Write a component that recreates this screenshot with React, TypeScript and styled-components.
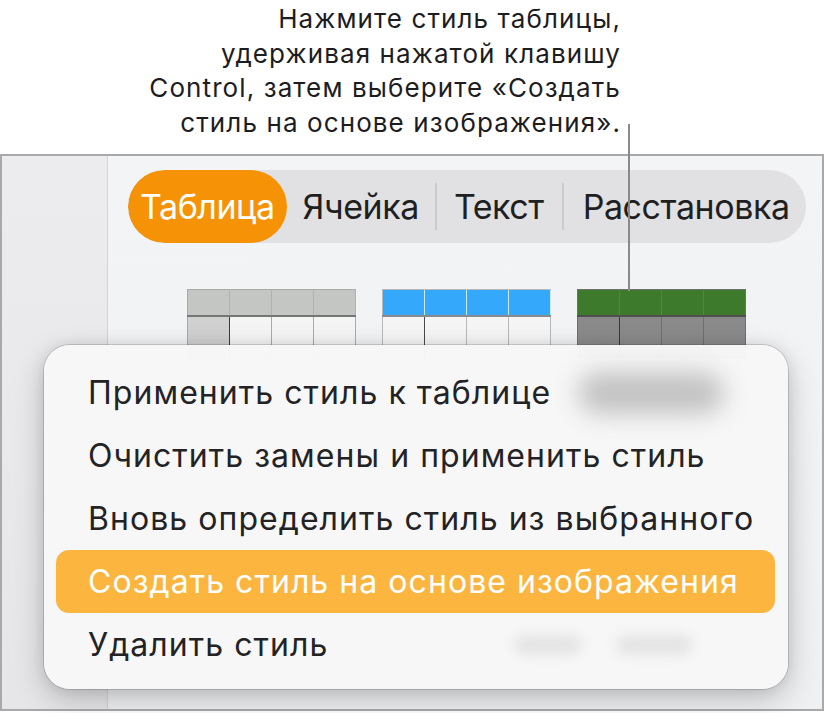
import React from "react";
import styled, { createGlobalStyle, css } from "styled-components";

const GlobalStyle = createGlobalStyle`
  html, body { margin: 0; padding: 0; background: #ffffff; }
  body { font-family: Inter, "Noto Sans", "Liberation Sans", sans-serif; }
  * { box-sizing: border-box; }
`;

const Page = styled.div`
  position: relative;
  width: 825px;
  height: 713px;
  overflow: hidden;
  display: flex;
  flex-direction: column;
`;

const Callout = styled.div`
  height: 154px;
  display: flex;
  justify-content: flex-end;
  padding: 2px 205px 0 0;
`;

const CalloutText = styled.p`
  margin: 0 -1px 0 0;
  text-align: right;
  font-size: 26px;
  line-height: 34.5px;
  color: #1d1d1f;
  letter-spacing: 1.1px;
`;

const Leader = styled.div`
  position: absolute;
  left: 628px;
  top: 124px;
  width: 2px;
  height: 167px;
  background: #8a8a8a;
`;

const Frame = styled.div`
  flex: 1;
  display: flex;
  width: 824px;
  border: 2px solid #a9a9ab;
  margin-bottom: 2px;
  background: #f1f2f4;
`;

const Sidebar = styled.div`
  flex: 0 0 106px;
  border-right: 1px solid #d4d4d6;
  background: linear-gradient(180deg, #ececee 0%, #e6e6e8 100%);
`;

const Main = styled.div`
  flex: 1;
  min-width: 0;
  display: flex;
  flex-direction: column;
  padding: 14px 16px 0 20px;
  background: linear-gradient(180deg, #f3f4f6 0%, #eff0f2 100%);
`;

const TabBar = styled.div`
  display: flex;
  align-items: center;
  height: 73px;
  border-radius: 37px;
  background: #e1e1e4;
  overflow: hidden;
`;

const Tab = styled.div<{ $active?: boolean; $pl: number; $pr: number }>`
  flex: none;
  height: 100%;
  display: flex;
  align-items: center;
  padding: 0 ${(p) => p.$pr}px 0 ${(p) => p.$pl}px;
  font-size: 34px;
  letter-spacing: -0.45px;
  color: #1f1f21;
  border-radius: 37px;
  ${(p) =>
    p.$active &&
    css`
      background: #f59205;
      color: #ffffff;
    `}
`;

const TabSep = styled.div`
  flex: none;
  width: 2px;
  height: 47px;
  background: #cbcbce;
`;

const Styles = styled.div`
  display: flex;
  justify-content: center;
  gap: 26px;
  margin-top: 46px;
  padding-right: 2px;
`;

type ThumbColors = {
  head: string;
  headLine: string;
  headSep: string;
  bodyFirst: string;
  body: string;
  firstSep: string;
  frame: string;
};

const Thumb = styled.div<{ $c: ThumbColors }>`
  width: 169px;
  display: grid;
  grid-template-columns: repeat(4, 1fr);
  grid-template-rows: 25px 2px 40px;
  border: 1px solid ${(p) => p.$c.frame};
  background: ${(p) => p.$c.frame};
  column-gap: 1px;
`;

const HeadCell = styled.div<{ $c: ThumbColors }>`
  background: ${(p) => p.$c.head};
  box-shadow: 1px 0 0 ${(p) => p.$c.headSep};
`;

const HeadLine = styled.div<{ $c: ThumbColors }>`
  grid-column: 1 / -1;
  background: ${(p) => p.$c.headLine};
  margin: 0 -1px;
`;

const BodyCell = styled.div<{ $c: ThumbColors; $first?: boolean }>`
  background: ${(p) => (p.$first ? p.$c.bodyFirst : p.$c.body)};
  ${(p) =>
    p.$first &&
    css`
      box-shadow: 2px 0 0 ${p.$c.firstSep};
    `}
`;

const Menu = styled.div`
  position: absolute;
  left: 44px;
  top: 345px;
  width: 744px;
  height: 344px;
  padding: 16px 13px 13px 12px;
  border-radius: 26px;
  background: rgba(247, 247, 247, 0.98);
  box-shadow: 0 0 0 1px rgba(0, 0, 0, 0.14), 0 10px 30px rgba(0, 0, 0, 0.22),
    0 0 14px rgba(0, 0, 0, 0.08);
  display: flex;
  flex-direction: column;
`;

const MenuItem = styled.div<{ $selected?: boolean }>`
  position: relative;
  height: 63px;
  display: flex;
  align-items: center;
  padding-left: 32px;
  font-size: 32px;
  letter-spacing: 1.05px;
  color: #232325;
  border-radius: 13px;
  ${(p) =>
    p.$selected &&
    css`
      background: #fcb53f;
      color: #ffffff;
    `}
`;

const Smudge = styled.span<{ $x: number; $w: number; $h: number; $tone: string; $blur: number }>`
  position: absolute;
  left: ${(p) => p.$x}px;
  top: 50%;
  width: ${(p) => p.$w}px;
  height: ${(p) => p.$h}px;
  margin-top: ${(p) => -p.$h / 2}px;
  border-radius: ${(p) => p.$h / 2}px;
  background: ${(p) => p.$tone};
  filter: blur(${(p) => p.$blur}px);
`;

const gray: ThumbColors = {
  head: "#c4c6c4",
  headLine: "#767676",
  headSep: "#b0b2b0",
  bodyFirst: "#d0d0d0",
  body: "#f4f4f4",
  firstSep: "#3a3a3a",
  frame: "#a9aaa9",
};

const blue: ThumbColors = {
  head: "#34a9fc",
  headLine: "#8a8a8a",
  headSep: "#cfe9ff",
  bodyFirst: "#f5f5f5",
  body: "#f5f5f5",
  firstSep: "#4a4a4a",
  frame: "#b8b8b8",
};

const green: ThumbColors = {
  head: "#3d7a2b",
  headLine: "#505050",
  headSep: "#6f6f6f",
  bodyFirst: "#8a8a8a",
  body: "#8a8a8a",
  firstSep: "#3a3a3a",
  frame: "#6f6f6f",
};

function StyleThumb({ c }: { c: ThumbColors }) {
  return (
    <Thumb $c={c}>
      {[0, 1, 2, 3].map((i) => (
        <HeadCell key={`h${i}`} $c={c} />
      ))}
      <HeadLine $c={c} />
      {[0, 1, 2, 3].map((i) => (
        <BodyCell key={`b${i}`} $c={c} $first={i === 0} />
      ))}
    </Thumb>
  );
}

const items = [
  "Применить стиль к таблице",
  "Очистить замены и применить стиль",
  "Вновь определить стиль из выбранного",
  "Создать стиль на основе изображения",
  "Удалить стиль",
];

export default function App() {
  return (
    <>
      <GlobalStyle />
      <Page>
        <Callout>
          <CalloutText>
            Нажмите стиль таблицы,
            <br />
            удерживая нажатой клавишу
            <br />
            Control, затем выберите «Создать
            <br />
            стиль на основе изображения».
          </CalloutText>
        </Callout>
        <Frame>
          <Sidebar />
          <Main>
            <TabBar>
              <Tab $active $pl={12} $pr={12}>Таблица</Tab>
              <Tab $pl={16} $pr={16}>Ячейка</Tab>
              <TabSep />
              <Tab $pl={17} $pr={18}>Текст</Tab>
              <TabSep />
              <Tab $pl={19} $pr={12}>Расстановка</Tab>
            </TabBar>
            <Styles>
              <StyleThumb c={gray} />
              <StyleThumb c={blue} />
              <StyleThumb c={green} />
            </Styles>
          </Main>
        </Frame>
        <Leader />
        <Menu>
          {items.map((t, i) => (
            <MenuItem key={t} $selected={i === 3}>
              {t}
              {i === 0 && <Smudge $x={522} $w={146} $h={42} $tone="#c2c2c2" $blur={12} />}
              {i === 4 && (
                <>
                  <Smudge $x={458} $w={68} $h={20} $tone="#e4e4e4" $blur={6} />
                  <Smudge $x={560} $w={76} $h={20} $tone="#e4e4e4" $blur={6} />
                </>
              )}
            </MenuItem>
          ))}
        </Menu>
      </Page>
    </>
  );
}
